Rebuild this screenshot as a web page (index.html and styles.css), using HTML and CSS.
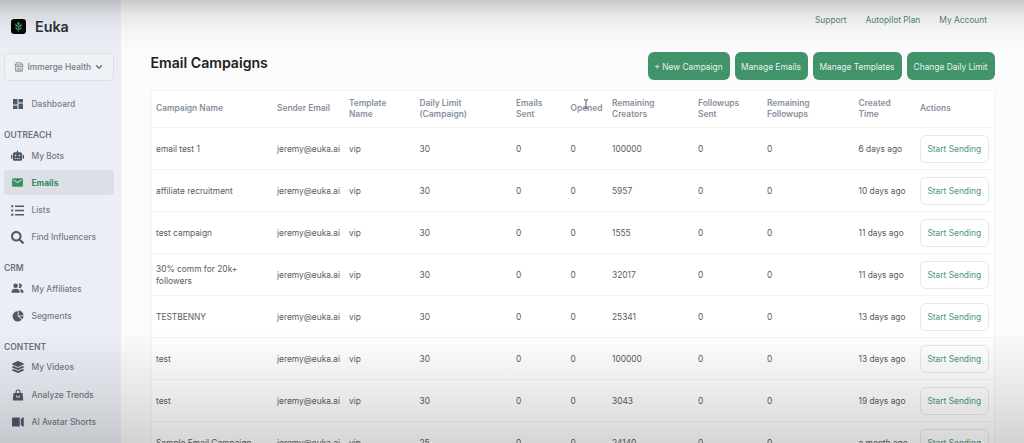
FILE: index.html
```html
<!DOCTYPE html>
<html lang="en">
<head>
    <meta charset="UTF-8">
    <meta name="viewport" content="width=device-width, initial-scale=1.0">
    <title>Euka - Email Campaigns</title>
    <link rel="stylesheet" href="styles.css">
</head>
<body>
    <div class="app">
        <aside class="sidebar">
            <div class="brand">
                <svg class="logo" viewBox="0 0 15 15">
                    <rect width="15" height="15" rx="3.2" fill="#050807"/>
                    <path d="M7.500 2.300l1.400 2.200-1.400 2.300-1.400-2.300zM4.200 4.600l2.700 2v1.800L4.500 7zM10.800 4.600L8.100 6.600v1.800L10.500 7zM4.200 7.900l2.700 1.500V11L4.700 10zM10.800 7.900L8.100 9.400V11l2.200-1zM7.100 7h.8v5.700h-.8z" fill="#4a9a6c"/>
                </svg>
                <span>Euka</span>
            </div>

            <button class="workspace">
                <svg class="shop" viewBox="0 0 24 24" fill="none" stroke="currentColor" stroke-width="2">
                    <path d="M6 2h12l4 7a3 3 0 0 1-5 1.500 3.500 3.500 0 0 1-5 0 3.500 3.500 0 0 1-5 0A3 3 0 0 1 2 9zM3 7h18M4 12v10h16V12M9 22v-6h6v6"/>
                </svg>
                <span>Immerge Health</span>
                <svg class="chevron" viewBox="0 0 10 10"><path d="M1.500 3L5 6.500 8.500 3" fill="none" stroke="currentColor" stroke-width="1.900"/></svg>
            </button>

            <nav>
                <a class="item">
                    <svg viewBox="0 0 24 24"><path d="M2 13h9V2H2zm0 9h9v-7H2zm11 0h9V11h-9zm0-20v7h9V2z"/></svg>
                    Dashboard
                </a>

                <h4 class="group">OUTREACH</h4>
                <a class="item">
                    <svg class="wide" viewBox="0 0 640 512"><path d="M32 224h32v192H32a32 32 0 0 1-32-32V256a32 32 0 0 1 32-32zm512-48v272a64 64 0 0 1-64 64H160a64 64 0 0 1-64-64V176a80 80 0 0 1 80-80h112V32a32 32 0 0 1 64 0v64h112a80 80 0 0 1 80 80zM264 256a40 40 0 1 0-80 0 40 40 0 0 0 80 0zm-8 128h-64v32h64zm96 0h-64v32h64zm104-128a40 40 0 1 0-80 0 40 40 0 0 0 80 0zm-8 128h-64v32h64zm192-128v128a32 32 0 0 1-32 32h-32V224h32a32 32 0 0 1 32 32z"/></svg>
                    My Bots
                </a>
                <a class="item active">
                    <svg class="wide" viewBox="0 0 24 24"><path d="M20 4H4a2 2 0 0 0-2 2v12c0 1.100.9 2 2 2h16a2 2 0 0 0 2-2V6a2 2 0 0 0-2-2zm0 4l-8 5-8-5V6l8 5 8-5z"/></svg>
                    Emails
                </a>
                <a class="item">
                    <svg class="wide" viewBox="0 0 512 512"><path d="M8 48h80v80H8zm0 168h80v80H8zm0 168h80v80H8zM160 60h352v56H160zm0 168h352v56H160zm0 168h352v56H160z"/></svg>
                    Lists
                </a>
                <a class="item">
                    <svg class="wide" viewBox="0 0 512 512"><path d="M505 442.700L405.300 343c-4.500-4.500-10.600-7-17-7H372c27.600-35.300 44-79.700 44-128C416 93.100 322.900 0 208 0S0 93.100 0 208s93.100 208 208 208c48.300 0 92.700-16.400 128-44v16.300c0 6.400 2.500 12.500 7 17l99.700 99.700c9.400 9.400 24.600 9.400 33.900 0l28.300-28.300c9.400-9.400 9.400-24.600.1-34zM208 336c-70.700 0-128-57.200-128-128 0-70.700 57.200-128 128-128 70.700 0 128 57.200 128 128 0 70.700-57.200 128-128 128z"/></svg>
                    Find Influencers
                </a>

                <h4 class="group">CRM</h4>
                <a class="item">
                    <svg class="wide" viewBox="0 0 24 20"><circle cx="8.500" cy="5" r="4.200"/><path d="M1 18v-2.500C1 12 5 10.600 8.500 10.600S16 12 16 15.500V18zM14 1.200a4.200 4.200 0 1 1 0 7.600 6 6 0 0 0 0-7.600zM18 18v-2.500c0-2-.8-3.500-2.200-4.600 3.500.1 7.200 1.500 7.200 4.600V18z"/></svg>
                    My Affiliates
                </a>
                <a class="item">
                    <svg viewBox="0 0 24 24"><path d="M11.500 2v10.500l8 7A10.500 10.500 0 1 1 11.500 2zM13.200 1A9.800 9.800 0 0 1 23 10.800h-9.800zM14 12.300h9a10 10 0 0 1-2.300 6z"/></svg>
                    Segments
                </a>

                <h4 class="group">CONTENT</h4>
                <a class="item">
                    <svg viewBox="0 0 512 512"><path d="M12.400 148l232.900 105.700c6.800 3.100 14.500 3.100 21.300 0L499.600 148c16.600-7.500 16.600-32.500 0-40L266.700 2.300a25.600 25.600 0 0 0-21.300 0L12.400 108c-16.600 7.500-16.600 32.500 0 40zm487.200 88.300l-58.100-26.300-161.600 73.300a58 58 0 0 1-47.800 0L70.500 210l-58.100 26.300c-16.600 7.500-16.600 32.500 0 40l232.900 105.600c6.800 3.100 14.500 3.100 21.300 0l233-105.600c16.600-7.500 16.600-32.500 0-40zm0 127.800l-57.900-26.200-161.900 73.400a58 58 0 0 1-47.800 0L70.300 337.900l-57.900 26.200c-16.600 7.500-16.600 32.500 0 40l232.900 105.600c6.800 3.100 14.500 3.100 21.300 0l233-105.600c16.600-7.500 16.600-32.500 0-40z"/></svg>
                    My Videos
                </a>
                <a class="item">
                    <svg viewBox="0 0 24 24"><path fill-rule="evenodd" d="M7 8V6a5 5 0 0 1 10 0v2h4l1.500 15h-21L3 8zm2.200 0h5.600V6a2.800 2.800 0 0 0-5.600 0zM7.500 13a4.500 4.500 0 0 0 9 0h-2a2.500 2.500 0 0 1-5 0z"/></svg>
                    Analyze Trends
                </a>
                <a class="item">
                    <svg viewBox="0 0 24 20"><path d="M2 1h13.500v18H2a2 2 0 0 1-2-2V3a2 2 0 0 1 2-2zM17.500 5L21 1h2.500v18H21l-3.500-4z"/></svg>
                    AI Avatar Shorts
                </a>
            </nav>
        </aside>

        <main class="main">
            <div class="topnav">
                <a>Support</a>
                <a>Autopilot Plan</a>
                <a>My Account</a>
            </div>

            <div class="heading">
                <h1>Email Campaigns</h1>
                <div class="buttons">
                    <button class="button new">+ New Campaign</button>
                    <button class="button emails">Manage Emails</button>
                    <button class="button templates">Manage Templates</button>
                    <button class="button limit">Change Daily Limit</button>
                </div>
            </div>

            <table class="campaigns">
                <colgroup>
                    <col class="c-name"><col class="c-sender"><col class="c-template"><col class="c-limit">
                    <col class="c-sent"><col class="c-opened"><col class="c-creators"><col class="c-followups">
                    <col class="c-remaining"><col class="c-created"><col class="c-actions">
                </colgroup>
                <thead>
                    <tr>
                        <th>Campaign Name</th>
                        <th>Sender Email</th>
                        <th>Template<br>Name</th>
                        <th>Daily Limit<br>(Campaign)</th>
                        <th>Emails<br>Sent</th>
                        <th>Opened</th>
                        <th>Remaining<br>Creators</th>
                        <th>Followups<br>Sent</th>
                        <th>Remaining<br>Followups</th>
                        <th>Created<br>Time</th>
                        <th>Actions</th>
                    </tr>
                </thead>
                <tbody>
                    <tr><td>email test 1</td><td>jeremy@euka.ai</td><td>vip</td><td>30</td><td>0</td><td>0</td><td>100000</td><td>0</td><td>0</td><td>6 days ago</td><td><button class="start">Start Sending</button></td></tr>
                    <tr><td>affiliate recruitment</td><td>jeremy@euka.ai</td><td>vip</td><td>30</td><td>0</td><td>0</td><td>5957</td><td>0</td><td>0</td><td>10 days ago</td><td><button class="start">Start Sending</button></td></tr>
                    <tr><td>test campaign</td><td>jeremy@euka.ai</td><td>vip</td><td>30</td><td>0</td><td>0</td><td>1555</td><td>0</td><td>0</td><td>11 days ago</td><td><button class="start">Start Sending</button></td></tr>
                    <tr><td>30% comm for 20k+<br>followers</td><td>jeremy@euka.ai</td><td>vip</td><td>30</td><td>0</td><td>0</td><td>32017</td><td>0</td><td>0</td><td>11 days ago</td><td><button class="start">Start Sending</button></td></tr>
                    <tr><td>TESTBENNY</td><td>jeremy@euka.ai</td><td>vip</td><td>30</td><td>0</td><td>0</td><td>25341</td><td>0</td><td>0</td><td>13 days ago</td><td><button class="start">Start Sending</button></td></tr>
                    <tr><td>test</td><td>jeremy@euka.ai</td><td>vip</td><td>30</td><td>0</td><td>0</td><td>100000</td><td>0</td><td>0</td><td>13 days ago</td><td><button class="start">Start Sending</button></td></tr>
                    <tr><td>test</td><td>jeremy@euka.ai</td><td>vip</td><td>30</td><td>0</td><td>0</td><td>3043</td><td>0</td><td>0</td><td>19 days ago</td><td><button class="start">Start Sending</button></td></tr>
                    <tr><td>Sample Email Campaign</td><td>jeremy@euka.ai</td><td>vip</td><td>25</td><td>0</td><td>0</td><td>24140</td><td>0</td><td>0</td><td>a month ago</td><td><button class="start">Start Sending</button></td></tr>
                </tbody>
            </table>
        </main>

        <div class="shade"></div>
        <svg class="cursor" viewBox="0 0 6 10"><path d="M1 .8h1.500L3 1.300l.5-.5H5M3 1.300v7.400M1 9.200h1.500L3 8.700l.5.5H5" fill="none" stroke="#444" stroke-width=".9"/></svg>
    </div>
</body>
</html>
```
FILE: styles.css
```css
* {
    box-sizing: border-box;
}
body {
    margin: 0;
    font-family: Inter, "Liberation Sans", sans-serif;
    font-size: 8.4px;
    color: #595c60;
    background: #fbfbfb;
}
button {
    font-family: inherit;
    font-size: 8.4px;
    padding: 0;
}
.app {
    position: relative;
    display: flex;
    width: 1024px;
    height: 443px;
    overflow: hidden;
}

/* sidebar */
.sidebar {
    width: 121px;
    flex: none;
    padding: 17px 7px 0 4px;
    background: #ebeff5;
}
.brand {
    display: flex;
    align-items: center;
    gap: 9px;
    height: 18px;
    padding-left: 7px;
    font-size: 14.3px;
    font-weight: 600;
    color: #2b3139;
}
.logo {
    width: 15px;
    height: 15px;
}
.workspace {
    display: flex;
    align-items: center;
    width: 110px;
    height: 28px;
    margin: 18px 0 10.8px;
    padding-left: 9px;
    border: 1px solid #dce0e6;
    border-radius: 4px;
    background: #eef1f6;
    color: #727a85;
    font-weight: 500;
    white-space: nowrap;
}
.shop {
    width: 10px;
    height: 10px;
    margin-right: 3.5px;
}
.chevron {
    width: 8px;
    height: 8px;
    margin-left: 3.5px;
}
.item {
    display: flex;
    align-items: center;
    height: 24.7px;
    margin-bottom: 2.6px;
    border-radius: 4px;
    color: #727b87;
    font-weight: 500;
    white-space: nowrap;
}
.item svg {
    width: 12px;
    height: 12px;
    margin: 0 8px 0 7.5px;
    fill: #4d5967;
}
.item svg.wide {
    width: 13px;
    height: 13px;
    margin: 0 7.5px 0 7px;
}
.item.active {
    background: #dce0e6;
    color: #35895c;
    font-weight: 700;
}
.item.active svg {
    fill: #35905f;
}
.group {
    margin: 12.7px 0 2px;
    font-size: 8.5px;
    line-height: 12px;
    font-weight: 600;
    color: #6c737d;
}

/* main area */
.main {
    width: 844px;
    margin-left: 29.5px;
    flex: none;
}
.topnav {
    display: flex;
    justify-content: flex-end;
    gap: 19px;
    padding: 14px 7.5px 0 0;
    line-height: 12px;
    color: #4f8a70;
}
.heading {
    display: flex;
    justify-content: space-between;
    margin-top: 26px;
}
h1 {
    margin: 0;
    font-size: 14.1px;
    line-height: 21px;
    font-weight: 600;
    color: #1e2024;
}
.buttons {
    display: flex;
    gap: 5px;
}
.button {
    height: 28px;
    padding-top: 1px;
    border: none;
    border-radius: 6px;
    background: #41936a;
    color: #e6f2ec;
    white-space: nowrap;
}
.new { width: 82px; }
.emails { width: 73px; }
.templates { width: 89px; }
.limit { width: 88px; }

.campaigns {
    width: 844px;
    margin-top: 9.5px;
    table-layout: fixed;
    border-collapse: separate;
    border-spacing: 0;
    border: 1px solid #f5f5f6;
    background: #fff;
}
.campaigns th,
.campaigns td {
    padding: 2.5px 0 0 4.5px;
    text-align: left;
    vertical-align: middle;
    line-height: 11.4px;
    white-space: nowrap;
    border-bottom: 1px solid #f4f4f5;
}
.campaigns th {
    height: 37px;
    padding-top: 1px;
    font-size: 8.4px;
    font-weight: 600;
    color: #87909c;
}
.campaigns td {
    height: 42.1px;
}
.campaigns td:last-child {
    padding: 1px 0 0 4px;
}
.c-name { width: 121px; }
.c-sender { width: 72px; }
.c-template { width: 70.5px; }
.c-limit { width: 96.5px; }
.c-sent { width: 54.5px; }
.c-opened { width: 41.5px; }
.c-creators { width: 86px; }
.c-followups { width: 69px; }
.c-remaining { width: 91.5px; }
.c-created { width: 61.5px; }
.start {
    display: block;
    width: 69.5px;
    height: 28px;
    border: 1px solid #e6e8ea;
    border-radius: 6px;
    background: transparent;
    color: #4b9775;
}

/* fades along the top and bottom edges */
.shade {
    position: absolute;
    inset: 0;
    pointer-events: none;
    background:
        linear-gradient(rgba(0, 0, 0, 0.2), rgba(0, 0, 0, 0.08) 15px, rgba(0, 0, 0, 0.02) 32px, transparent 50px),
        linear-gradient(transparent 330px, rgba(0, 0, 0, 0.08) 390px, rgba(0, 0, 0, 0.16) 443px);
}
.cursor {
    position: absolute;
    left: 583px;
    top: 99px;
    width: 6px;
    height: 10px;
}
```
